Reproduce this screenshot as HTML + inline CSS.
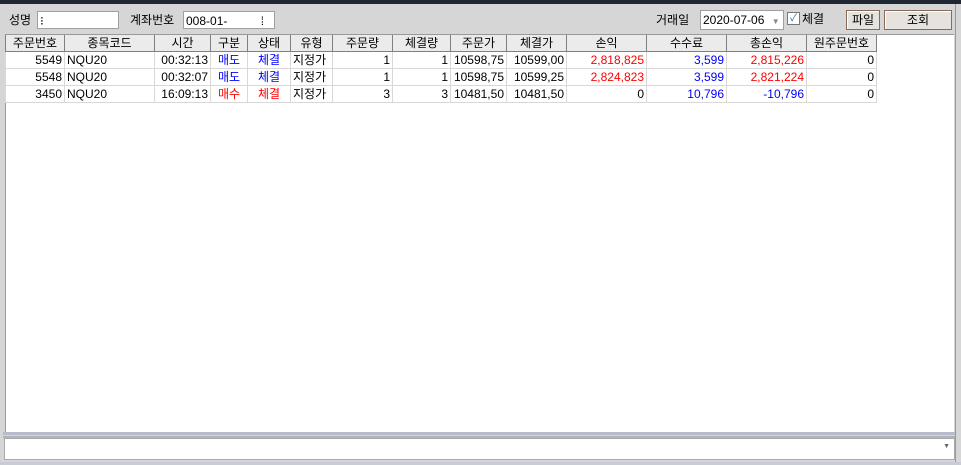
<!DOCTYPE html><html><head><meta charset="utf-8"><style>
body{margin:0;width:961px;height:465px;background:#d6d6d6;position:relative;overflow:hidden;font-family:"Liberation Sans","Noto Sans CJK KR",sans-serif;font-size:12px;color:#000}
.a{position:absolute}
.in{position:absolute;background:#fff;border:1px solid #a0a0a0;height:18px;line-height:18px;box-sizing:border-box;padding-left:2px}
.btn{position:absolute;border:1px solid #8a6a5a;background:#e6e3de;text-align:center;line-height:18px;height:20px;box-sizing:border-box;box-shadow:inset 1px 1px #fff}
table{border-collapse:collapse;position:absolute;left:5px;top:35px;table-layout:fixed}
td,th{height:16px;line-height:16px;padding:0 2px;border:1px solid #d8d8d8;white-space:nowrap;overflow:hidden;font-size:12px}
th{font-weight:normal;background:#ebebeb;border:1px solid #808080;border-top:none;text-align:center}
td{text-align:right}
.l{text-align:left}.c{text-align:center}.r{color:#f00}.b{color:#00f}
</style></head><body>
<div class="a" style="left:0;top:0;width:961px;height:4px;background:#1f2733"></div>
<div class="a" style="left:955px;top:4px;width:6px;height:461px;background:#d6d6d6;border-left:1px solid #999"></div>
<div class="a" style="left:9px;top:11px">성명</div>
<div class="in" style="left:37px;top:11px;width:82px">⁝</div>
<div class="a" style="left:130px;top:11px">계좌번호</div>
<div class="in" style="left:183px;top:11px;width:92px">008-01-&nbsp;&nbsp;&nbsp;&nbsp;&nbsp;&nbsp;&nbsp;&nbsp;&nbsp;&nbsp;⁞</div>
<div class="a" style="left:656px;top:11px">거래일</div>
<div class="in" style="left:700px;top:10px;width:84px;height:20px;line-height:18px">2020-07-06 <span style="color:#888;font-size:8px;margin-left:4px">▼</span></div>
<div class="a" style="left:787px;top:12px;width:11px;height:11px;border:1px solid #777;background:#fff;font-size:10px;line-height:11px;text-align:center;color:#36a">✓</div>
<div class="a" style="left:802px;top:10px">체결</div>
<div class="btn" style="left:846px;top:10px;width:34px">파일</div>
<div class="btn" style="left:884px;top:10px;width:68px">조회</div>
<div class="a" style="left:5px;top:34px;width:948px;height:398px;background:#fff;border-left:1px solid #999;border-top:1px solid #999"></div>
<table>
<colgroup><col style="width:59px"><col style="width:90px"><col style="width:56px"><col style="width:37px"><col style="width:43px"><col style="width:42px"><col style="width:60px"><col style="width:58px"><col style="width:56px"><col style="width:60px"><col style="width:80px"><col style="width:80px"><col style="width:80px"><col style="width:70px"></colgroup>
<tr><th>주문번호</th><th>종목코드</th><th>시간</th><th>구분</th><th>상태</th><th>유형</th><th>주문량</th><th>체결량</th><th>주문가</th><th>체결가</th><th>손익</th><th>수수료</th><th>총손익</th><th>원주문번호</th></tr>
<tr><td>5549</td><td class="l">NQU20</td><td>00:32:13</td><td class="c b">매도</td><td class="c b">체결</td><td class="l">지정가</td><td>1</td><td>1</td><td>10598,75</td><td>10599,00</td><td class="r">2,818,825</td><td class="b">3,599</td><td class="r">2,815,226</td><td>0</td></tr>
<tr><td>5548</td><td class="l">NQU20</td><td>00:32:07</td><td class="c b">매도</td><td class="c b">체결</td><td class="l">지정가</td><td>1</td><td>1</td><td>10598,75</td><td>10599,25</td><td class="r">2,824,823</td><td class="b">3,599</td><td class="r">2,821,224</td><td>0</td></tr>
<tr><td>3450</td><td class="l">NQU20</td><td>16:09:13</td><td class="c r">매수</td><td class="c r">체결</td><td class="l">지정가</td><td>3</td><td>3</td><td>10481,50</td><td>10481,50</td><td>0</td><td class="b">10,796</td><td class="b">-10,796</td><td>0</td></tr>
</table>
<div class="a" style="left:3px;top:432px;width:952px;height:3px;background:#b8bcc8"></div>
<div class="a" style="left:3px;top:436px;width:952px;height:2px;background:#b0b4c0"></div>
<div class="a" style="left:4px;top:438px;width:949px;height:20px;background:#fff;border:1px solid #aaa"><span style="position:absolute;right:4px;top:4px;font-size:7px;color:#666">▼</span></div>
<div class="a" style="left:0;top:462px;width:961px;height:3px;background:#c8ccd4"></div>
</body></html>
